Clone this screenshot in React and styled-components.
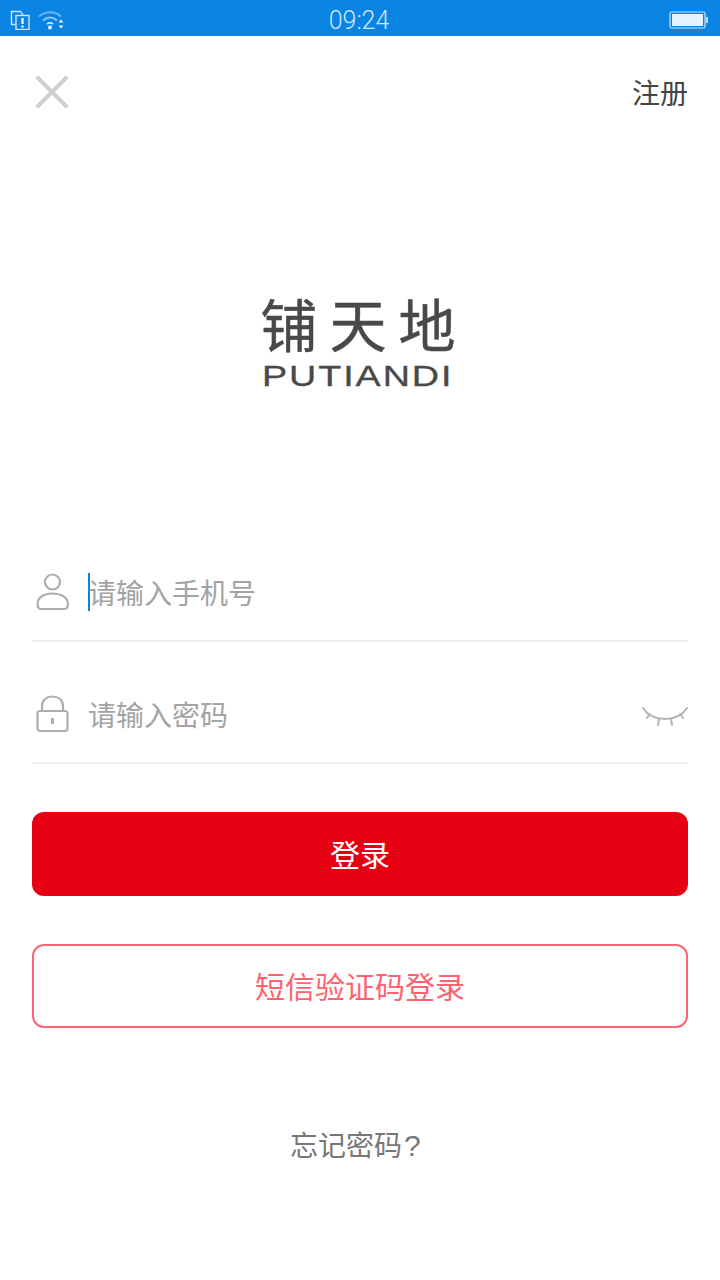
import React from 'react'
import styled, { createGlobalStyle } from 'styled-components'

const GlobalStyle = createGlobalStyle`
    html, body {
        margin: 0;
        padding: 0;
        background: #fff;
        font-family: "Noto Sans CJK SC", "Noto Sans", sans-serif;
    }
`

const Page = styled.div`
    width: 720px;
    height: 1280px;
    overflow: hidden;
    background: #fff;
`

const StatusBar = styled.div`
    height: 36px;
    background: #0984e3;
    display: grid;
    grid-template-columns: 1fr auto 1fr;
    align-items: center;
    padding: 0 12px 0 10px;
    box-sizing: border-box;
`

const StatusLeft = styled.div`
    display: flex;
    align-items: center;
    gap: 8px;
`

const StatusRight = styled.div`
    display: flex;
    justify-content: flex-end;
`

const Clock = styled.span`
    font-family: "Roboto", sans-serif;
    font-size: 25px;
    font-weight: 300;
    line-height: 36px;
    color: #cfe7fb;
    margin-top: 3px;
`

const Content = styled.div`
    padding: 0 32px;
`

const Header = styled.div`
    height: 112px;
    display: flex;
    justify-content: space-between;
    align-items: center;
`

const CloseButton = styled.div`
    padding-left: 4px;
    display: flex;
`

const RegisterLink = styled.span`
    font-size: 28px;
    line-height: 40px;
    color: #444;
`

const Logo = styled.div`
    margin-top: 142px;
    height: 104px;
    display: flex;
    flex-direction: column;
    align-items: center;
    color: #4a4848;
`

const LogoName = styled.div`
    font-size: 57px;
    line-height: 64px;
    letter-spacing: 12px;
    margin-right: -8px;
    white-space: nowrap;
    -webkit-text-stroke: 0.5px #4a4848;
`

const LogoLatin = styled.div`
    font-family: "Liberation Sans", sans-serif;
    font-size: 29px;
    line-height: 32px;
    letter-spacing: 1.5px;
    margin: 6px 4px 0 0;
    white-space: nowrap;
    transform: scaleX(1.3);
    -webkit-text-stroke: 0.3px #4a4848;
`

const Field = styled.div`
    height: 50px;
    padding: 44px 0 26px;
    margin-top: ${p => p.$top || 0}px;
    border-bottom: 2px solid #f0f0f0;
    display: flex;
    align-items: flex-end;
`

const FieldIcon = styled.div`
    width: 56px;
    padding: 0 0 3px 4px;
    box-sizing: border-box;
    display: flex;
`

const Caret = styled.span`
    width: 2px;
    height: 38px;
    background: #0984e3;
    margin: 6px -2px 0 0;
    flex: none;
    align-self: center;
`

const Placeholder = styled.span`
    flex: 1;
    font-size: 28px;
    line-height: 44px;
    color: #a3a3a3;
`

const EyeWrap = styled.div`
    display: flex;
    padding-bottom: 9px;
`

const Button = styled.div`
    height: 84px;
    box-sizing: border-box;
    border-radius: 12px;
    padding-bottom: 2px;
    display: flex;
    align-items: center;
    justify-content: center;
    font-size: 30px;
    background: ${p => (p.$outline ? '#fff' : '#e60012')};
    color: ${p => (p.$outline ? '#ff6372' : '#fff')};
    border: ${p => (p.$outline ? '2px solid #ff6372' : 'none')};
    margin-top: 48px;
`

const Forgot = styled.div`
    margin-top: 94px;
    text-align: center;
    font-size: 28px;
    line-height: 44px;
    color: #777;
`

const QuestionMark = styled.span`
    display: inline-block;
    width: 28px;
    box-sizing: border-box;
    padding-left: 2px;
    text-align: left;
    font-family: "Liberation Sans", sans-serif;
    font-size: 30px;
`

const CopyIcon = () => (
    <svg width="20" height="20" viewBox="0 0 20 20" fill="none" stroke="#cfe7fb" strokeWidth="1.4">
        <path d="M11 1.500H1.500v13H5" />
        <path d="M11 1.500l2 4" />
        <rect x="6" y="5.500" width="13" height="14" />
        <path d="M12.500 8v6M12.500 15.500v2" strokeWidth="2.200" stroke="#fff" />
    </svg>
)

const WifiIcon = () => (
    <svg width="26" height="20" viewBox="0 0 26 20" fill="none">
        <path d="M1 6.500C7 .8 17 .8 23 6.500" stroke="#6fb5ef" strokeWidth="1.800" />
        <path d="M5 10.500c4.500-3.800 9.500-3.800 14 0" stroke="#8cc4f3" strokeWidth="1.800" />
        <path d="M9 14c2-1.500 4-1.500 6 0" stroke="#cfe7fb" strokeWidth="1.800" />
        <circle cx="12" cy="17.500" r="2" fill="#e8f4fd" />
        <path d="M20.500 12.500l2.500-3 2.500 3zM20.500 15.500l2.500 3 2.500-3z" fill="#e8f4fd" />
    </svg>
)

const BatteryIcon = () => (
    <svg width="39" height="18" viewBox="0 0 39 18" fill="none">
        <rect x="1" y="1" width="35" height="16" rx="1.500" stroke="#cfe7fb" strokeWidth="1.200" />
        <rect x="3" y="3" width="31" height="12" fill="#e6f3fd" />
        <rect x="37" y="6" width="2" height="6" fill="#b5dafa" />
    </svg>
)

const CloseIcon = () => (
    <svg width="32" height="32" viewBox="0 0 32 32" fill="none" stroke="#cfcfcf" strokeWidth="4" strokeLinecap="round">
        <path d="M2 2l28 28M30 2L2 30" />
    </svg>
)

const UserIcon = () => (
    <svg width="34" height="38" viewBox="0 0 34 38" fill="none" stroke="#aeaeae" strokeWidth="2.200">
        <circle cx="16.500" cy="9" r="7.500" />
        <path d="M1.500 31c0-7 7-10.500 15-10.500s15.500 3.500 15.500 10.500c0 3.500-2 5-4 5H5c-2 0-3.500-1.500-3.500-5z" />
    </svg>
)

const LockIcon = () => (
    <svg width="34" height="38" viewBox="0 0 34 38" fill="none" stroke="#aeaeae" strokeWidth="2.200">
        <path d="M6 17v-6c0-6 4.500-9.500 10.500-9.500S27 5 27 11v6" />
        <rect x="1.500" y="16" width="30" height="20" rx="2.500" />
        <path d="M16.500 23v6" strokeWidth="3" />
    </svg>
)

const EyeIcon = () => (
    <svg width="46" height="20" viewBox="0 0 46 20" fill="none" stroke="#b4b4b4" strokeWidth="2" strokeLinecap="round">
        <path d="M1 1c5 8 12 11 22 11s17-3 22-11" />
        <path d="M8 7l-3 4M17 12l-1 6M29 12l1 6M38 7l3 4" />
    </svg>
)

const App = () => (
    <Page>
        <GlobalStyle />
        <StatusBar>
            <StatusLeft>
                <CopyIcon />
                <WifiIcon />
            </StatusLeft>
            <Clock>09:24</Clock>
            <StatusRight>
                <BatteryIcon />
            </StatusRight>
        </StatusBar>
        <Content>
            <Header>
                <CloseButton>
                    <CloseIcon />
                </CloseButton>
                <RegisterLink>注册</RegisterLink>
            </Header>
            <Logo>
                <LogoName>铺天地</LogoName>
                <LogoLatin>PUTIANDI</LogoLatin>
            </Logo>
            <Field $top={126}>
                <FieldIcon>
                    <UserIcon />
                </FieldIcon>
                <Caret />
                <Placeholder>请输入手机号</Placeholder>
            </Field>
            <Field>
                <FieldIcon>
                    <LockIcon />
                </FieldIcon>
                <Placeholder>请输入密码</Placeholder>
                <EyeWrap>
                    <EyeIcon />
                </EyeWrap>
            </Field>
            <Button>登录</Button>
            <Button $outline>短信验证码登录</Button>
            <Forgot>忘记密码<QuestionMark>?</QuestionMark></Forgot>
        </Content>
    </Page>
)

export default App
